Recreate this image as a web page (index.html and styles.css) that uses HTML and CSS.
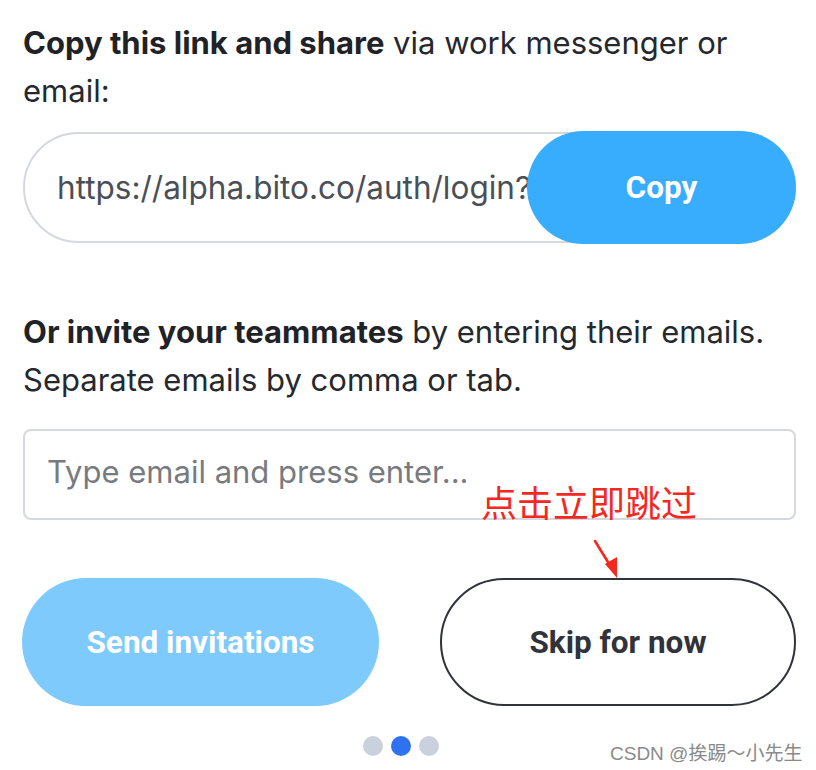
FILE: index.html
```html
<!DOCTYPE html>
<html lang="en">
<head>
<meta charset="utf-8">
<title>Invite teammates</title>
<link rel="stylesheet" href="styles.css">
</head>
<body>
<main class="page">
  <p class="lead"><strong>Copy this link and share</strong> via work messenger or email:</p>
  <div class="link-row">
    <div class="link-field"><span class="link-text">https://alpha.bito.co/auth/login?</span></div>
    <button class="btn btn-copy">Copy</button>
  </div>

  <p class="lead lead-invite"><strong>Or invite your teammates</strong> by entering their emails. Separate emails by comma or tab.</p>
  <div class="email-field"><span class="placeholder">Type email and press enter...</span></div>

  <div class="actions">
    <button class="btn btn-send">Send invitations</button>
    <button class="btn btn-skip">Skip for now</button>
  </div>

  <div class="dots">
    <span class="dot"></span>
    <span class="dot dot-active"></span>
    <span class="dot"></span>
  </div>

  <div class="note">点击立即跳过</div>
  <svg class="arrow" width="30" height="44" viewBox="0 0 30 44">
    <line x1="2" y1="2" x2="18" y2="28" stroke="#f5281f" stroke-width="2.6" stroke-linecap="round"/>
    <polygon points="12,25 24,18 24,39" fill="#f5281f"/>
  </svg>
  <div class="watermark">CSDN @挨踢～小先生</div>
</main>
</body>
</html>
```

FILE: styles.css
```css
* { box-sizing: border-box; }
html, body { margin: 0; padding: 0; background: #ffffff; }
body {
  font-family: "Inter", "Liberation Sans", "Noto Sans CJK SC", sans-serif;
  color: #22252b;
}
.page {
  position: relative;
  width: 816px;
  height: 770px;
  padding: 19px 20px 0 23px;
  overflow: hidden;
}
.lead {
  margin: 0;
  font-size: 31px;
  line-height: 48px;
  letter-spacing: 0;
  color: #25282e;
}
.lead strong { font-weight: 700; color: #1f2227; }
.link-row {
  display: flex;
  align-items: center;
  margin-top: 16px;
  height: 113px;
}
.link-field {
  flex: 0 0 773px;
  height: 111px;
  border: 2px solid #d5d8dd;
  border-radius: 56px;
  padding-left: 32px;
  display: flex;
  align-items: center;
  white-space: nowrap;
}
.link-text {
  font-size: 31.5px;
  color: #4a4f57;
}
.btn {
  font-family: "Roboto", "Inter", "Liberation Sans", sans-serif;
  font-weight: 700;
  font-size: 31.5px;
  border-radius: 64px;
  cursor: pointer;
}
.btn-copy {
  flex: 0 0 269px;
  margin-left: -269px;
  height: 113px;
  border: none;
  background: #38adfd;
  color: #ffffff;
  position: relative;
}
.lead-invite { margin-top: 64px; }
.email-field {
  margin-top: 25px;
  height: 91px;
  border: 2px solid #d5d8dd;
  border-radius: 8px;
  padding-left: 22px;
  display: flex;
  align-items: center;
  padding-bottom: 6px;
}
.placeholder {
  font-size: 31px;
  color: #777a7f;
}
.actions {
  display: grid;
  grid-template-columns: 357px 356px;
  column-gap: 61px;
  margin-top: 58px;
  margin-left: -1px;
}
.btn-send {
  height: 128px;
  border: none;
  background: #7ecafd;
  color: #ffffff;
}
.btn-skip {
  height: 128px;
  border: 2px solid #30343a;
  background: #ffffff;
  color: #30343a;
}
.dots {
  display: flex;
  justify-content: center;
  gap: 8px;
  margin-top: 30px;
  padding-right: 18px;
}
.dot {
  width: 20px;
  height: 20px;
  border-radius: 50%;
  background: #cbd1dc;
}
.dot-active { background: #2f72f0; }
.note {
  position: absolute;
  left: 481px;
  top: 481px;
  font-family: "Noto Sans CJK SC", sans-serif;
  font-size: 36px;
  line-height: 40px;
  color: #f5281f;
  letter-spacing: 0;
}
.arrow {
  position: absolute;
  left: 593px;
  top: 539px;
}
.watermark {
  position: absolute;
  left: 610px;
  top: 740px;
  font-family: "Liberation Sans", "Noto Sans CJK SC", sans-serif;
  font-size: 19px;
  line-height: 28px;
  color: #8a8a8a;
  text-shadow: 0 0 2px #ffffff, 0 0 2px #ffffff;
}
```
